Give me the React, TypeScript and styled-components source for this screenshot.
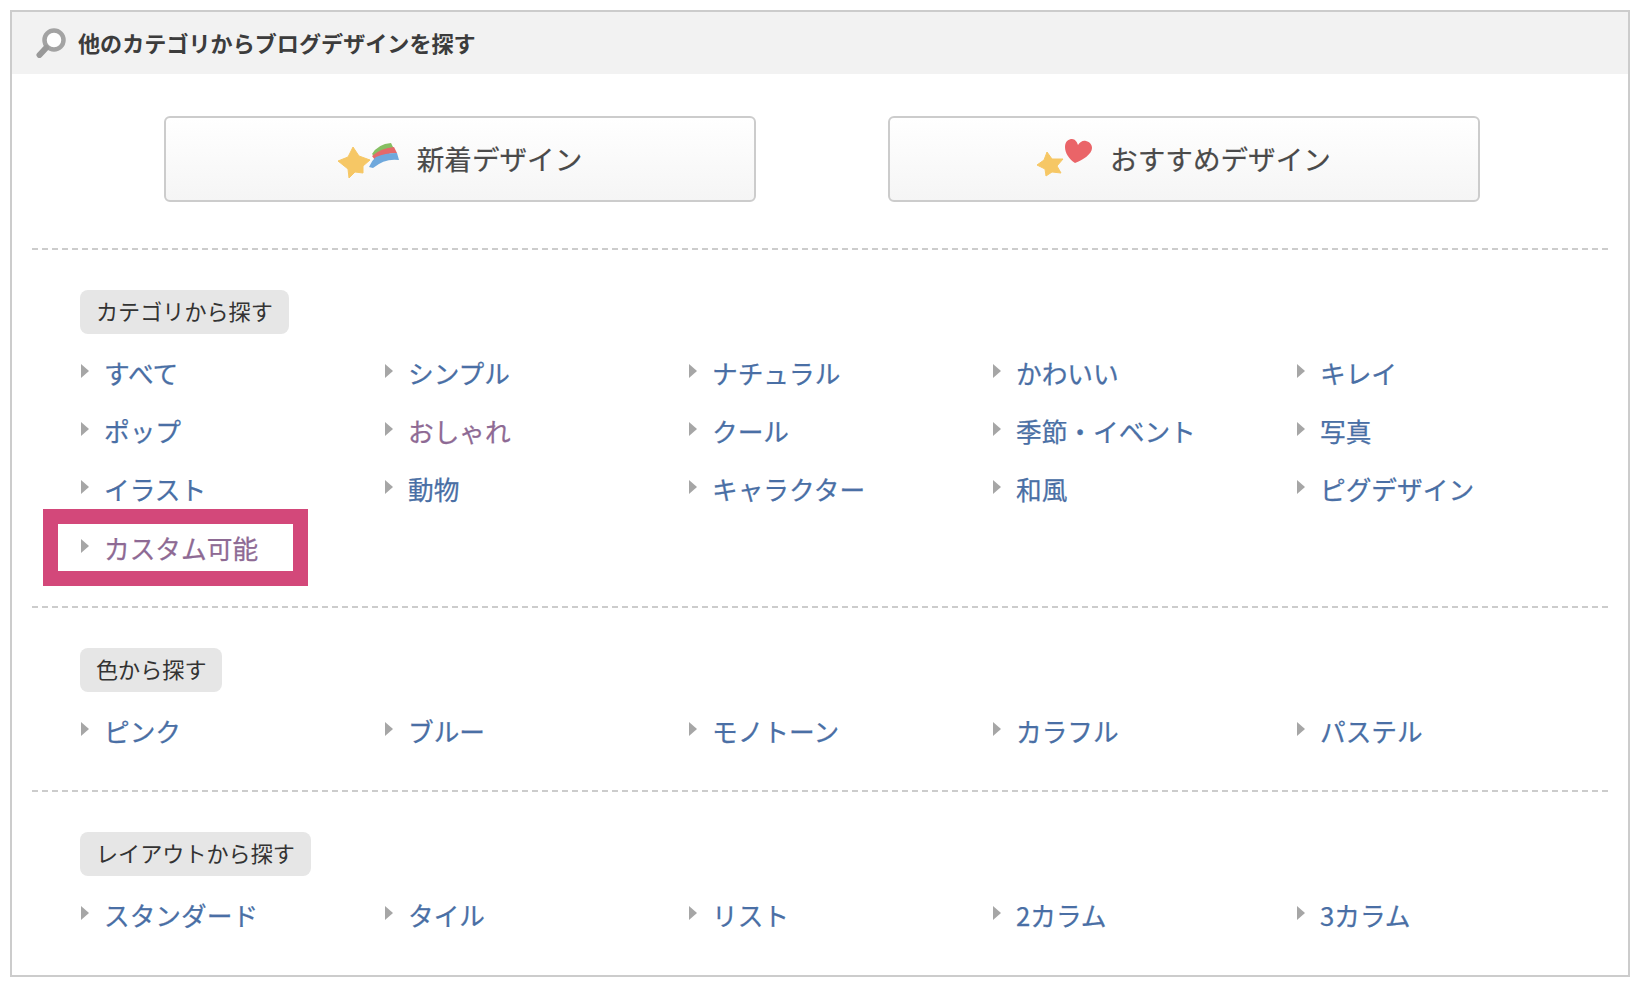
import styled, { createGlobalStyle } from "styled-components";

const GlobalStyle = createGlobalStyle`
  html, body {
    margin: 0;
    padding: 0;
    background: #fff;
  }
  * {
    box-sizing: border-box;
  }
`;

const Panel = styled.div`
  width: 1620px;
  height: 967px;
  margin: 10px 0 0 10px;
  border: 2px solid #ccc;
  background: #fff;
  font-family: "Noto Sans CJK JP", "Liberation Sans", sans-serif;
`;

const Header = styled.div`
  height: 62px;
  padding-left: 24px;
  display: flex;
  align-items: center;
  gap: 11px;
  background: #f2f2f2;
`;

const Title = styled.h2`
  margin: 0 0 3px;
  font-size: 22.1px;
  font-weight: 700;
  color: #3c3c3c;
`;

const Buttons = styled.div`
  padding: 42px 0 46px 152px;
  display: flex;
  gap: 132px;
`;

const FeatureButton = styled.a`
  width: 592px;
  height: 86px;
  padding-bottom: 3px;
  display: flex;
  align-items: center;
  justify-content: center;
  gap: 17px;
  border: 2px solid #ccc;
  border-radius: 6px;
  background: linear-gradient(#fff, #f5f5f5);
  font-size: 27.6px;
  color: #4a4a4a;
  -webkit-text-stroke: 0.2px #4a4a4a;
`;

const Section = styled.section<{ $tail: number }>`
  margin: 0 20px;
  padding: 40px 0 ${(p) => p.$tail}px 48px;
  border-top: 2px dashed #ccc;
`;

const Label = styled.div`
  display: inline-flex;
  align-items: center;
  height: 44px;
  padding: 0 16px 5px;
  border-radius: 8px;
  background: #e6e6e6;
  font-size: 22.1px;
  color: #333;
`;

const LinkGrid = styled.ul`
  list-style: none;
  margin: 10px 0 0;
  padding: 0;
  display: grid;
  grid-template-columns: repeat(5, 304px);
  grid-auto-rows: 58.3px;
`;

const Item = styled.li<{ $marked?: boolean }>`
  position: relative;
  display: flex;
  align-items: center;
  gap: 15px;

  ${(p) =>
    p.$marked &&
    `&::after {
      content: "";
      position: absolute;
      box-sizing: border-box;
      left: -37px;
      top: -10px;
      width: 265px;
      height: 77px;
      border: 15px solid #d3487a;
      pointer-events: none;
    }`}
`;

const Arrow = styled.span`
  width: 0;
  height: 0;
  margin: -5px 0 0 1px;
  border-style: solid;
  border-width: 7px 0 7px 8px;
  border-color: transparent transparent transparent #a6a6a6;
  filter: blur(0.5px);
`;

const ItemLink = styled.a<{ $visited?: boolean }>`
  margin-top: -2px;
  font-size: 25.7px;
  color: ${(p) => (p.$visited ? "#8e6a94" : "#4a6fa5")};
  -webkit-text-stroke: 0.25px ${(p) => (p.$visited ? "#8e6a94" : "#4a6fa5")};
`;

const SoftIcon = styled.svg<{ $lift?: number }>`
  flex-shrink: 0;
  margin-bottom: ${(p) => p.$lift ?? 0}px;
  filter: blur(0.5px);
`;

const SearchIcon = () => (
  <SoftIcon width="31" height="32" viewBox="0 0 31 32">
    <circle cx="18" cy="13" r="11" fill="#fff" />
    <circle cx="18" cy="13" r="9.5" fill="none" stroke="#a3a3a3" strokeWidth="4.5" />
    <path d="M10 21 L3.5 28" stroke="#999" strokeWidth="6" strokeLinecap="round" />
  </SoftIcon>
);

const RainbowStarIcon = () => (
  <SoftIcon width="62" height="50" viewBox="0 0 62 50" $lift={5}>
    <path
      d="M15 17 L21 26 L32 30 L25 36 L25 43 L17 42 L11 48 L10 39 L0 31 L10 27 Z"
      fill="#f6c765"
      stroke="#f6c765"
      strokeLinejoin="round"
    />
    <path d="M34 24 Q40 14 53 13 L56 19 Q44 18 36 26 Z" fill="#86bf62" />
    <path d="M34 26 Q43 18 56 17 L59 23 Q47 23 37 30 Z" fill="#e4696a" />
    <path d="M31 37 Q35 29 38 27 Q47 23 59 23 L61 30 Q47 28 35 38 Z" fill="#6fa8dc" />
  </SoftIcon>
);

const HeartStarIcon = () => (
  <SoftIcon width="56" height="40" viewBox="0 0 56 40">
    <path
      d="M10 14 L15 21 L26 21 L20 28 L24 35 L15 34 L9 38 L8 31 L0 27 L7 22 Z"
      fill="#f6c765"
      stroke="#f6c765"
      strokeLinejoin="round"
    />
    <path
      d="M38 25 C32 21 28 15 28 9 C28 3 32 1 35 1 C38 1 40 4 41 7 C43 4 46 2 49 3 C53 4 55 7 55 10 C55 16 46 22 38 25 Z"
      fill="#ea6468"
    />
  </SoftIcon>
);

type Entry = { text: string; visited?: boolean; marked?: boolean };

const CATEGORIES: Entry[] = [
  { text: "すべて" },
  { text: "シンプル" },
  { text: "ナチュラル" },
  { text: "かわいい" },
  { text: "キレイ" },
  { text: "ポップ" },
  { text: "おしゃれ", visited: true },
  { text: "クール" },
  { text: "季節・イベント" },
  { text: "写真" },
  { text: "イラスト" },
  { text: "動物" },
  { text: "キャラクター" },
  { text: "和風" },
  { text: "ピグデザイン" },
  { text: "カスタム可能", visited: true, marked: true },
];

const COLORS: Entry[] = [
  { text: "ピンク" },
  { text: "ブルー" },
  { text: "モノトーン" },
  { text: "カラフル" },
  { text: "パステル" },
];

const LAYOUTS: Entry[] = [
  { text: "スタンダード" },
  { text: "タイル" },
  { text: "リスト" },
  { text: "2カラム" },
  { text: "3カラム" },
];

const LinkSection = ({
  label,
  entries,
  tail,
}: {
  label: string;
  entries: Entry[];
  tail: number;
}) => (
  <Section $tail={tail}>
    <Label>{label}</Label>
    <LinkGrid>
      {entries.map((e) => (
        <Item key={e.text} $marked={e.marked}>
          <Arrow />
          <ItemLink $visited={e.visited}>{e.text}</ItemLink>
        </Item>
      ))}
    </LinkGrid>
  </Section>
);

export default function App() {
  return (
    <>
      <GlobalStyle />
      <Panel>
        <Header>
          <SearchIcon />
          <Title>他のカテゴリからブログデザインを探す</Title>
        </Header>
        <Buttons>
          <FeatureButton>
            <RainbowStarIcon />
            新着デザイン
          </FeatureButton>
          <FeatureButton>
            <HeartStarIcon />
            おすすめデザイン
          </FeatureButton>
        </Buttons>
        <LinkSection label="カテゴリから探す" entries={CATEGORIES} tail={29} />
        <LinkSection label="色から探す" entries={COLORS} tail={30} />
        <LinkSection label="レイアウトから探す" entries={LAYOUTS} tail={0} />
      </Panel>
    </>
  );
}
